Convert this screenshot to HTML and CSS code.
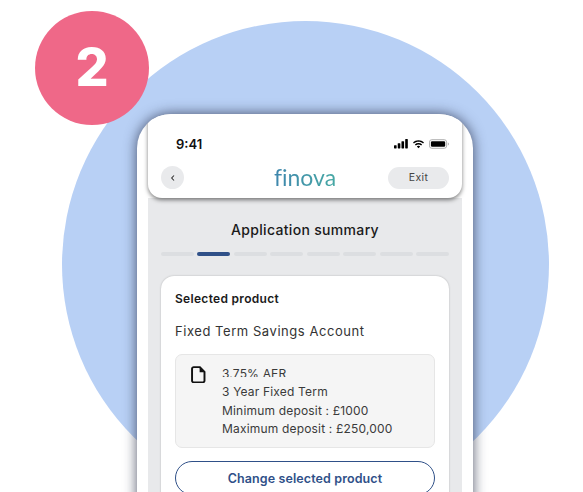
FILE: index.html
```html
<!DOCTYPE html>
<html>
<head>
  <meta charset="utf-8">
  <title>Application summary</title>
  <link rel="stylesheet" href="styles.css">
</head>
<body>
  <div class="scene">
    <div class="circle"></div>
    <div class="badge">2</div>
    <div class="phone">
      <div class="top">
        <div class="status">
          <span class="time">9:41</span>
          <span class="icons">
            <svg width="14" height="9.500" viewBox="0 0 15 10"><rect x="0" y="6.500" width="2.800" height="3.500" rx=".6"/><rect x="4" y="4.500" width="2.800" height="5.500" rx=".6"/><rect x="8" y="2.200" width="2.800" height="7.800" rx=".6"/><rect x="12" y="0" width="2.800" height="10" rx=".6"/></svg>
            <svg width="13" height="10" viewBox="0 0 14 10"><path d="M7 2.600c1.900 0 3.600.7 4.900 1.900l1-1.100C11.300 1.900 9.300 1 7 1S2.700 1.900 1.100 3.400l1 1.100C3.400 3.300 5.100 2.600 7 2.600z"/><path d="M7 5.500c1.100 0 2.100.4 2.900 1.100l1-1.100C9.800 4.500 8.500 4 7 4s-2.800.5-3.900 1.500l1 1.100C4.900 5.900 5.900 5.500 7 5.500z"/><path d="M7 6.900c-.7 0-1.300.3-1.800.7L7 9.600l1.800-2c-.5-.4-1.100-.7-1.800-.7z"/></svg>
            <svg width="20" height="10" viewBox="0 0 21 10"><rect x=".5" y=".5" width="18" height="9" rx="2.500" fill="none" stroke="#aaa"/><rect x="2" y="2" width="15" height="6" rx="1.300"/><path d="M19.800 3.500c.7.200 1.100.8 1.100 1.500s-.4 1.300-1.100 1.500z" fill="#aaa"/></svg>
          </span>
        </div>
        <div class="nav">
          <span class="back">
            <svg width="6" height="8" viewBox="0 0 6 8"><path d="M4 1.500L1.700 4 4 6.500" fill="none" stroke="#333" stroke-width="1.100"/></svg>
          </span>
          <span class="logo">finova</span>
          <span class="exit">Exit</span>
        </div>
      </div>
      <div class="body">
        <h1 class="title">Application summary</h1>
        <div class="steps">
          <i></i><i class="on"></i><i></i><i></i><i></i><i></i><i></i><i></i>
        </div>
        <div class="card">
          <div class="card-label">Selected product</div>
          <div class="product">Fixed Term Savings Account</div>
          <div class="info">
            <svg class="doc" width="15" height="17.500" viewBox="0 0 16 19"><path d="M2.800 1.200h6.700l5 5.200v9.600a1.800 1.800 0 0 1-1.800 1.800H2.800A1.800 1.800 0 0 1 1 16V3a1.800 1.800 0 0 1 1.800-1.800z" fill="none" stroke="#111" stroke-width="2.100"/><path d="M9.200 1.500v5.200h5z" fill="#111"/></svg>
            <div class="lines">
              <div class="cut"><span>3.75% AER</span></div>
              <div>3 Year Fixed Term</div>
              <div class="deposit">Minimum deposit : £1000</div>
              <div>Maximum deposit : £250,000</div>
            </div>
          </div>
          <div class="change">Change selected product</div>
        </div>
      </div>
    </div>
  </div>
</body>
</html>
```

FILE: styles.css
```css
*{margin: 0;padding: 0;box-sizing: border-box;}
html, body{
  width: 583px;
  height: 492px;
  overflow: hidden;
  background-color: #ffffff;
  font-family: "Inter","Noto Sans",sans-serif;
}
.scene{
  position: relative;
  width: 583px;
  height: 492px;
  overflow: hidden;
  padding: 114px 110px 0 137px;
}
.circle{
  position: absolute;
  left: 62px;
  top: 21px;
  width: 487px;
  height: 487px;
  border-radius: 50%;
  background-color: #b8d0f5;
}
.badge{
  position: absolute;
  left: 35px;
  top: 11px;
  width: 114px;
  height: 114px;
  border-radius: 50%;
  background-color: #ef6888;
  color: #ffffff;
  font-size: 52px;
  font-weight: 800;
  line-height: 114px;
  text-align: center;
}
.phone{
  position: relative;
  width: 336px;
  height: 500px;
  padding: 0 11px;
  overflow: hidden;
  background-color: #ffffff;
  border-radius: 34px 34px 0 0;
  box-shadow: 0 0 13px rgba(30,35,60,.75);
}
.top{
  position: relative;
  height: 84px;
  background-color: #ffffff;
  border-radius: 0 0 14px 14px;
  box-shadow: 0 2px 4px rgba(0,0,0,.5);
}
.status{
  display: flex;
  justify-content: space-between;
  align-items: center;
  height: 58px;
  padding: 2px 13px 0 28px;
}
.time{
  font-size: 13px;
  font-weight: 600;
  color: #111111;
}
.icons{
  display: flex;
  align-items: center;
  gap: 4px;
}
.nav{
  display: grid;
  grid-template-columns: 1fr auto 1fr;
  align-items: center;
  height: 23px;
  margin-top: -6px;
  padding: 0 13px;
}
.back{
  display: flex;
  align-items: center;
  justify-content: center;
  width: 23px;
  height: 23px;
  border-radius: 50%;
  background-color: #e9eaec;
}
.logo{
  font-family: "Lato",sans-serif;
  font-size: 23px;
  font-variant-ligatures: none;
  line-height: 23px;
  background: linear-gradient(90deg, #3f86ad, #46a8a4);
  -webkit-background-clip: text;
  background-clip: text;
  -webkit-text-fill-color: transparent;
}
.exit{
  justify-self: end;
  width: 61px;
  height: 22px;
  border-radius: 11px;
  background-color: #e9eaec;
  color: #444444;
  font-size: 10.500px;
  letter-spacing: .4px;
  line-height: 22px;
  text-align: center;
}
.body{
  height: 416px;
  padding: 0 13px;
  background-color: #e8e9eb;
}
.title{
  padding-top: 23px;
  font-size: 14px;
  font-weight: 500;
  line-height: 18px;
  letter-spacing: .32px;
  text-align: center;
  color: #1a1a1a;
}
.steps{
  display: flex;
  gap: 3.500px;
  margin-top: 13px;
}
.steps i{
  flex: 1;
  height: 3.500px;
  border-radius: 2px;
  background-color: #dcdee1;
}
.steps .on{
  background-color: #2f5088;
}
.card{
  margin-top: 20.500px;
  height: 260px;
  padding: 16px 14px;
  background-color: #ffffff;
  border-radius: 13px;
  box-shadow: 0 0 2px rgba(0,0,0,.25);
}
.card-label{
  font-size: 12px;
  font-weight: 600;
  line-height: 14px;
  letter-spacing: .3px;
  color: #1a1a1a;
}
.product{
  margin-top: 17px;
  font-size: 13px;
  line-height: 17px;
  letter-spacing: .55px;
  color: #333333;
}
.info{
  display: flex;
  height: 94px;
  margin-top: 13.500px;
  padding: 10.500px 15px;
  background-color: #f5f5f5;
  border: 1px solid #e6e6e6;
  border-radius: 7px;
}
.doc{
  flex-shrink: 0;
  margin-top: .500px;
  margin-right: 16px;
}
.lines{
  font-size: 12px;
  line-height: 18.500px;
  letter-spacing: .18px;
  color: #3a3a3a;
}
.cut{
  height: 11.500px;
  margin-bottom: 6px;
  overflow: hidden;
}
.deposit{
  padding-top: .500px;
}
.change{
  height: 34px;
  margin-top: 13.500px;
  border: 1px solid #2f5088;
  border-radius: 17px;
  color: #2f5088;
  font-size: 12.500px;
  font-weight: 600;
  line-height: 33px;
  letter-spacing: .1px;
  text-align: center;
}
```
